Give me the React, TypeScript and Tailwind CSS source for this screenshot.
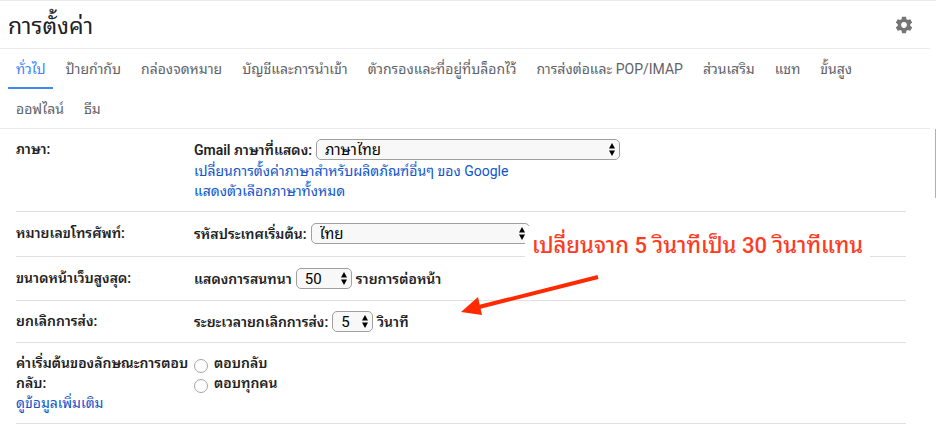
import type { ReactNode } from "react"
import clsx from "clsx"

const tabs = [
  "ทั่วไป",
  "ป้ายกำกับ",
  "กล่องจดหมาย",
  "บัญชีและการนำเข้า",
  "ตัวกรองและที่อยู่ที่บล็อกไว้",
  "การส่งต่อและ POP/IMAP",
  "ส่วนเสริม",
  "แชท",
  "ขั้นสูง",
  "ออฟไลน์",
  "ธีม",
]

function GearIcon() {
  return (
    <svg viewBox="0 0 24 24" className="size-5" fill="#757575" aria-hidden="true">
      <path d="M19.43 12.98c.04-.32.07-.64.07-.98s-.03-.66-.07-.98l2.11-1.65c.19-.15.24-.42.12-.64l-2-3.46c-.12-.22-.39-.3-.61-.22l-2.49 1c-.52-.4-1.08-.73-1.69-.98l-.38-2.65C14.46 2.18 14.25 2 14 2h-4c-.25 0-.46.18-.49.42l-.38 2.65c-.61.25-1.17.59-1.69.98l-2.49-1c-.23-.09-.49 0-.61.22l-2 3.46c-.13.22-.07.49.12.64l2.11 1.65c-.04.32-.07.65-.07.98s.03.66.07.98l-2.11 1.65c-.19.15-.24.42-.12.64l2 3.46c.12.22.39.3.61.22l2.49-1c.52.4 1.08.73 1.69.98l.38 2.65c.03.24.24.42.49.42h4c.25 0 .46-.18.49-.42l.38-2.65c.61-.25 1.17-.59 1.69-.98l2.49 1c.23.09.49 0 .61-.22l2-3.46c.12-.22.07-.49-.12-.64l-2.11-1.65zM12 15.5c-1.93 0-3.5-1.57-3.5-3.5s1.57-3.5 3.5-3.5 3.5 1.57 3.5 3.5-1.57 3.5-3.5 3.5z" />
    </svg>
  )
}

interface SelectProps {
  id: string
  value: string
  className: string
}

function Select({ id, value, className }: SelectProps) {
  return (
    <span className={clsx("relative inline-flex shrink-0", className)}>
      <select
        id={id}
        defaultValue={value}
        className="h-[21px] w-full appearance-none rounded-[5px] border border-[#a0a0a0] bg-[#f8f8f8] pt-0.5 pl-2 text-[15px] leading-[17px] font-normal text-black"
      >
        <option>{value}</option>
      </select>
      <svg viewBox="0 0 6 13" className="pointer-events-none absolute top-1 right-[5px] h-[13px] w-[6px]" aria-hidden="true">
        <path d="M3 0 6 5.5H0zM3 13 0 7.5h6z" />
      </svg>
    </span>
  )
}

interface RowProps {
  label: ReactNode
  children: ReactNode
  className?: string
}

function Row({ label, children, className = "py-[10px]" }: RowProps) {
  return (
    <div className={clsx("flex border-b border-[#e0e0e0]", className)}>
      <div className="w-[178px] shrink-0 font-semibold">{label}</div>
      <div className="min-w-0 flex-1">{children}</div>
    </div>
  )
}

function Annotation() {
  return (
    <>
      <p className="absolute top-[226px] left-[525px] bg-white px-[7px] pt-[6px] pb-1 text-[22px] leading-7 font-medium whitespace-nowrap text-[#ff3b1f]">
        เปลี่ยนจาก 5 วินาทีเป็น 30 วินาทีแทน
      </p>
      <svg viewBox="0 0 138 42" className="absolute top-[274px] left-[461px] h-[42px] w-[138px]" aria-hidden="true">
        <path d="M137 3 18 33" stroke="#ff2a00" strokeWidth="4" />
        <path d="M0 38 17 23l4 18z" fill="#ff2a00" />
      </svg>
    </>
  )
}

export default function App() {
  return (
    <main className="relative min-h-screen overflow-hidden bg-white font-[Roboto,'Noto_Sans_Thai_Looped',Thonburi,Loma,Waree,Garuda,sans-serif] text-sm leading-5 text-[#222]">
      <header className="border-t border-[#e8eaed]">
        <div className="mr-[6px] flex h-12 items-center justify-between border-b border-[#e8eaed] pr-4 pl-2">
          <h1 className="pt-1 text-[23px] leading-7 text-[#202124]">การตั้งค่า</h1>
          <button type="button" aria-label="การตั้งค่า">
            <GearIcon />
          </button>
        </div>
      </header>

      <nav className="mr-[6px] border-b border-[#e8eaed]">
        <div className="-mb-px flex flex-wrap gap-x-1 pr-10 pl-2">
          {tabs.map((tab, i) => (
            <a
              key={tab}
              href="#"
              className={clsx(
                "flex h-10 items-center border-b-2 px-2 pt-0.5",
                i === 0 ? "border-[#4285f4] text-[#4285f4]" : "border-transparent text-[#5f6368]",
              )}
            >
              {tab}
            </a>
          ))}
        </div>
      </nav>

      <div className="mr-[30px] ml-4">
        <Row label="ภาษา:">
          <div className="mb-px flex items-center gap-1">
            <label htmlFor="language" className="font-semibold">Gmail ภาษาที่แสดง:</label>
            <Select id="language" value="ภาษาไทย" className="w-[304px]" />
          </div>
          <a href="#" className="block w-fit text-[#15c]">เปลี่ยนการตั้งค่าภาษาสำหรับผลิตภัณฑ์อื่นๆ ของ Google</a>
          <a href="#" className="block w-fit text-[#15c]">แสดงตัวเลือกภาษาทั้งหมด</a>
        </Row>
        <Row label="หมายเลขโทรศัพท์:" className="pt-[11px] pb-3">
          <div className="flex items-center gap-1">
            <label htmlFor="country" className="font-semibold">รหัสประเทศเริ่มต้น:</label>
            <Select id="country" value="ไทย" className="w-[219px]" />
          </div>
        </Row>
        <Row label="ขนาดหน้าเว็บสูงสุด:" className="py-[11px]">
          <div className="flex items-center gap-1 font-semibold">
            <label htmlFor="page-size">แสดงการสนทนา</label>
            <Select id="page-size" value="50" className="w-[56px]" />
            <span>รายการต่อหน้า</span>
          </div>
        </Row>
        <Row label="ยกเลิกการส่ง:">
          <div className="flex items-center gap-1 font-semibold">
            <label htmlFor="undo">ระยะเวลายกเลิกการส่ง:</label>
            <Select id="undo" value="5" className="w-[41px]" />
            <span>วินาที</span>
          </div>
        </Row>
        <Row
          label={
            <>
              ค่าเริ่มต้นของลักษณะการตอบกลับ:
              <a href="#" className="block w-fit font-normal text-[#15c]">ดูข้อมูลเพิ่มเติม</a>
            </>
          }
        >
          {["ตอบกลับ", "ตอบทุกคน"].map((option) => (
            <label key={option} className="flex w-fit items-end gap-1.5 font-semibold">
              <input
                type="radio"
                name="reply"
                className="size-[14px] appearance-none rounded-full border border-[#a6a6a6] bg-white checked:border-4 checked:border-[#4285f4]"
              />
              {option}
            </label>
          ))}
        </Row>
      </div>

      <div className="absolute top-[129px] right-0 h-[69px] w-px bg-[#b0b0b0]" />
      <Annotation />
    </main>
  )
}
